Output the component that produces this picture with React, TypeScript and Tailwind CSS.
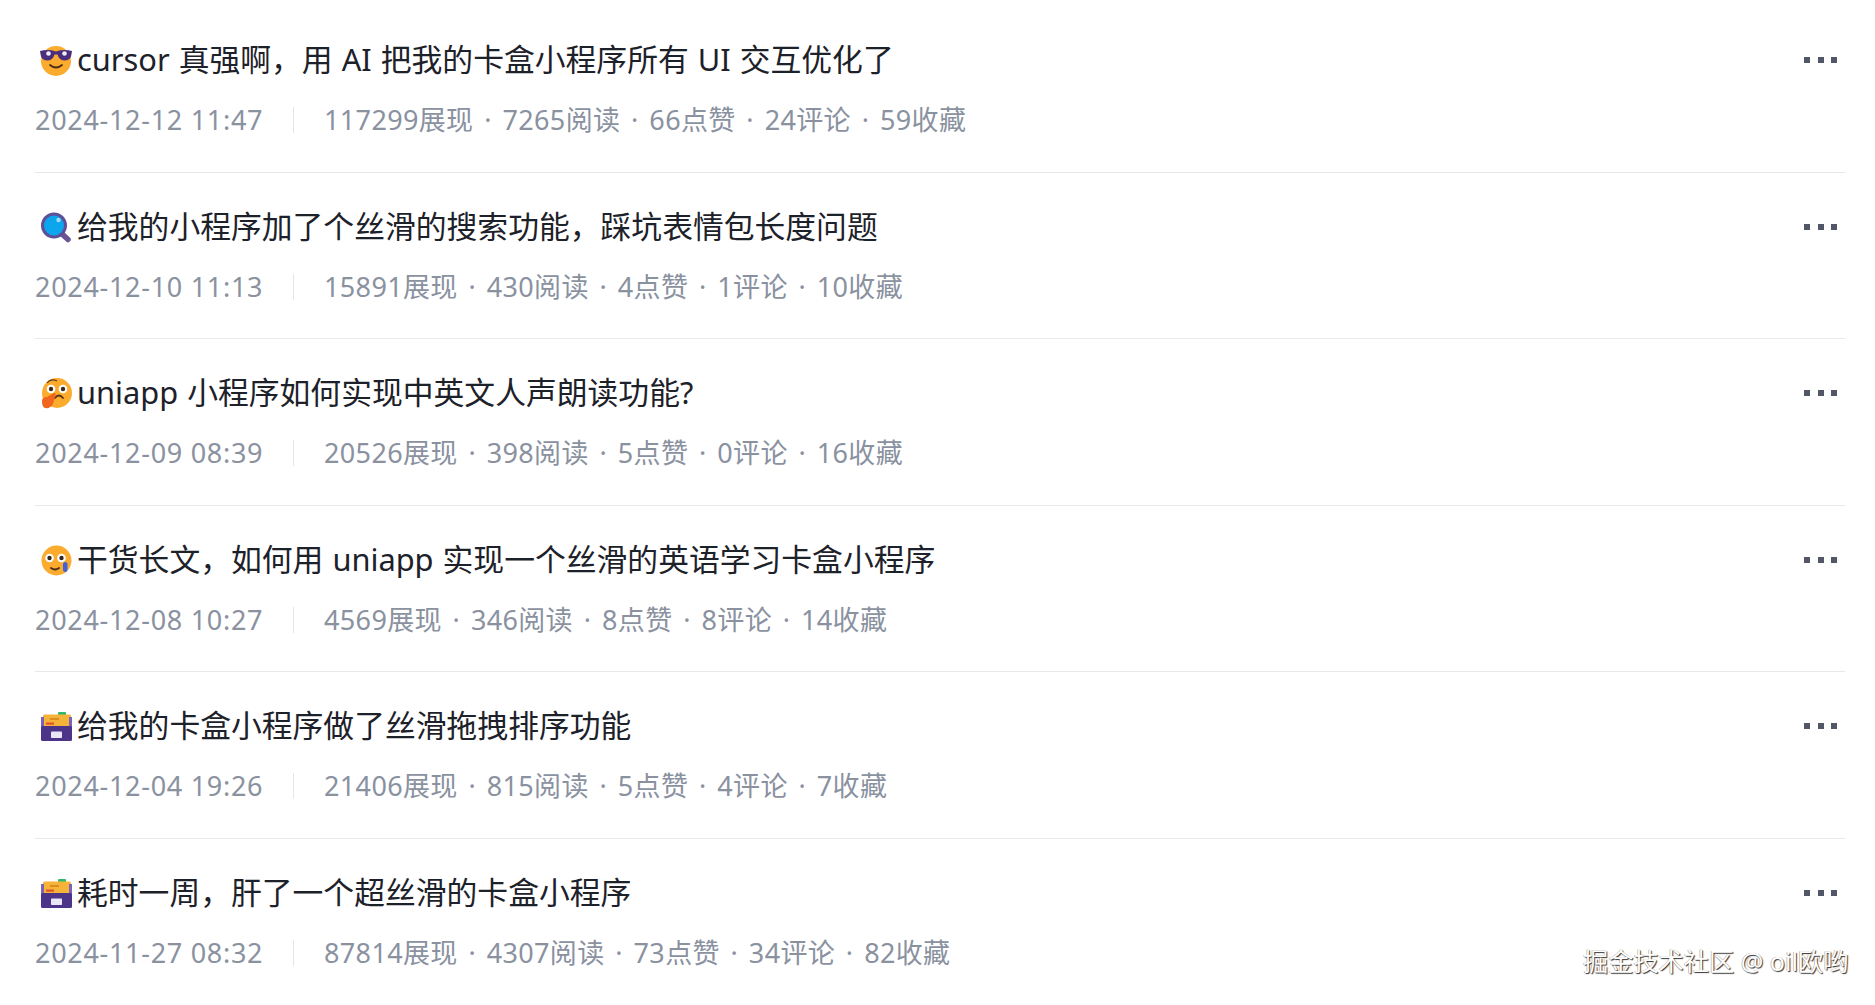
import React from "react";

const Cool = () => (
  <svg viewBox="0 0 34 32" className="w-[34px] h-[32px] shrink-0">
    <circle cx="17" cy="17" r="15" fill="#fbac2e" />
    <path d="M1 7 Q9 5 17 7.500 Q25 5 33 7 L32.500 10 Q32 16 26 16.500 Q20 16.500 18.500 10.500 L15.500 10.500 Q14 16.500 8 16.500 Q2 16 1.500 10 Z" fill="#4b2f7c" />
    <circle cx="9.500" cy="9.500" r="2.300" fill="#f1eef8" />
    <circle cx="25.500" cy="9.500" r="2.300" fill="#f1eef8" />
    <path d="M11 21 Q17 26 23 21" fill="none" stroke="#4a2c16" strokeWidth="1.800" strokeLinecap="round" />
  </svg>
);

const Magnifier = () => (
  <svg viewBox="0 0 34 32" className="w-[34px] h-[32px] shrink-0">
    <path d="M22 22 L29 28.500" stroke="#6b5594" strokeWidth="5.500" strokeLinecap="round" />
    <circle cx="15" cy="14.500" r="11.500" fill="#0ca6ee" stroke="#5f4f98" strokeWidth="3" />
    <circle cx="19.500" cy="9" r="2.200" fill="#9fdcf9" />
  </svg>
);

const Thinking = () => (
  <svg viewBox="0 0 34 32" className="w-[34px] h-[32px] shrink-0">
    <circle cx="18" cy="16" r="15" fill="#fbac2e" />
    <path d="M8 6 Q12 1 18 4" fill="none" stroke="#6b3d1a" strokeWidth="1.200" />
    <circle cx="12" cy="12" r="4.300" fill="#fff" />
    <circle cx="12" cy="12" r="2.200" fill="#3b2a22" />
    <circle cx="24" cy="12" r="4.300" fill="#fff" />
    <circle cx="24" cy="12" r="2.200" fill="#3b2a22" />
    <path d="M16 21 Q20 16 24 21" fill="none" stroke="#5a2f16" strokeWidth="1.800" strokeLinecap="round" />
    <path d="M3 24 Q3 20 8 20 L15 16 Q18 16 16 20 L14 27 Q11 32 6 31 Q3 30 3 24 Z" fill="#f0661f" />
  </svg>
);

const Tear = () => (
  <svg viewBox="0 0 34 32" className="w-[34px] h-[32px] shrink-0">
    <circle cx="17.500" cy="16.500" r="15" fill="#fbac2e" />
    <circle cx="10.500" cy="14" r="4.300" fill="#fff" />
    <circle cx="10.500" cy="14" r="2.200" fill="#33261e" />
    <circle cx="22.500" cy="14" r="4.300" fill="#fff" />
    <circle cx="22.500" cy="14" r="2.200" fill="#33261e" />
    <path d="M12 24 Q16 27 20 24" fill="none" stroke="#4a2c16" strokeWidth="1.800" strokeLinecap="round" />
    <rect x="24" y="18" width="4.500" height="10" rx="2.200" fill="#3f62d8" />
  </svg>
);

const Box = () => (
  <svg viewBox="0 0 34 32" className="w-[34px] h-[32px] shrink-0">
    <rect x="19" y="2" width="8" height="4" rx="1" fill="#2fb86a" />
    <rect x="4" y="4.500" width="28" height="14" rx="1.500" fill="#f6b33a" />
    <rect x="2" y="7" width="3" height="12" fill="#7b63b8" />
    <rect x="30" y="7" width="3" height="12" fill="#7b63b8" />
    <rect x="11" y="8" width="9" height="2" fill="#d98e1e" />
    <rect x="7" y="12.500" width="8" height="2.200" fill="#e2552b" />
    <rect x="2" y="16" width="31" height="15" rx="1.500" fill="#4c3589" />
    <rect x="12" y="21.500" width="11" height="6.500" rx="0.800" fill="#e9e6f5" />
  </svg>
);

const items = [
  { icon: <Cool />, title: "cursor 真强啊，用 AI 把我的卡盒小程序所有 UI 交互优化了", time: "2024-12-12 11:47", stats: ["117299展现", "7265阅读", "66点赞", "24评论", "59收藏"] },
  { icon: <Magnifier />, title: "给我的小程序加了个丝滑的搜索功能，踩坑表情包长度问题", time: "2024-12-10 11:13", stats: ["15891展现", "430阅读", "4点赞", "1评论", "10收藏"] },
  { icon: <Thinking />, title: "uniapp 小程序如何实现中英文人声朗读功能?", time: "2024-12-09 08:39", stats: ["20526展现", "398阅读", "5点赞", "0评论", "16收藏"] },
  { icon: <Tear />, title: "干货长文，如何用 uniapp 实现一个丝滑的英语学习卡盒小程序", time: "2024-12-08 10:27", stats: ["4569展现", "346阅读", "8点赞", "8评论", "14收藏"] },
  { icon: <Box />, title: "给我的卡盒小程序做了丝滑拖拽排序功能", time: "2024-12-04 19:26", stats: ["21406展现", "815阅读", "5点赞", "4评论", "7收藏"] },
  { icon: <Box />, title: "耗时一周，肝了一个超丝滑的卡盒小程序", time: "2024-11-27 08:32", stats: ["87814展现", "4307阅读", "73点赞", "34评论", "82收藏"] },
];

export default function App() {
  return (
    <div className="relative h-[1005px] overflow-hidden bg-white pl-[35px] pr-[30px] pt-[40px] font-['Noto_Sans','Noto_Sans_CJK_SC',sans-serif]">
      <div>
        {items.map((it, i) => (
          <div key={i} className="mb-[34px] h-[132.5px] border-b border-[#e8e9ed] last:border-b-0">
            <div className="flex h-[40px] items-center justify-between">
              <div className="flex items-center text-[30.8px] leading-[38px] text-[#1d2129] [word-spacing:1px]">
                <span className="ml-[4px] mr-[4px] flex">{it.icon}</span>
                <span className="pb-[2px]">{it.title}</span>
              </div>
              <div className="mr-[8px] flex gap-[7.5px]">
                <span className="h-[6px] w-[6px] bg-[#515767]" />
                <span className="h-[6px] w-[6px] bg-[#515767]" />
                <span className="h-[6px] w-[6px] bg-[#515767]" />
              </div>
            </div>
            <div className="mt-[20px] flex h-[40px] items-center text-[27px] leading-[40px] text-[#8a919f]">
              <span className="w-[258px] tracking-[0.7px]">{it.time}</span>
              <span className="h-[26px] w-px bg-[#e4e6eb]" />
              <span className="ml-[30px] flex items-center tracking-[0.35px]">
                {it.stats.map((s, j) => (
                  <React.Fragment key={j}>
                    {j > 0 && <span className="w-[29px] text-center">·</span>}
                    <span>{s}</span>
                  </React.Fragment>
                ))}
              </span>
            </div>
          </div>
        ))}
      </div>
      <div className="absolute left-[1583px] top-[942px] text-[25.2px] leading-[38px] text-white [text-shadow:1px_1px_1px_#333,-0.5px_-0.5px_0.5px_#999]">
        掘金技术社区 @ oil欧哟
      </div>
    </div>
  );
}
